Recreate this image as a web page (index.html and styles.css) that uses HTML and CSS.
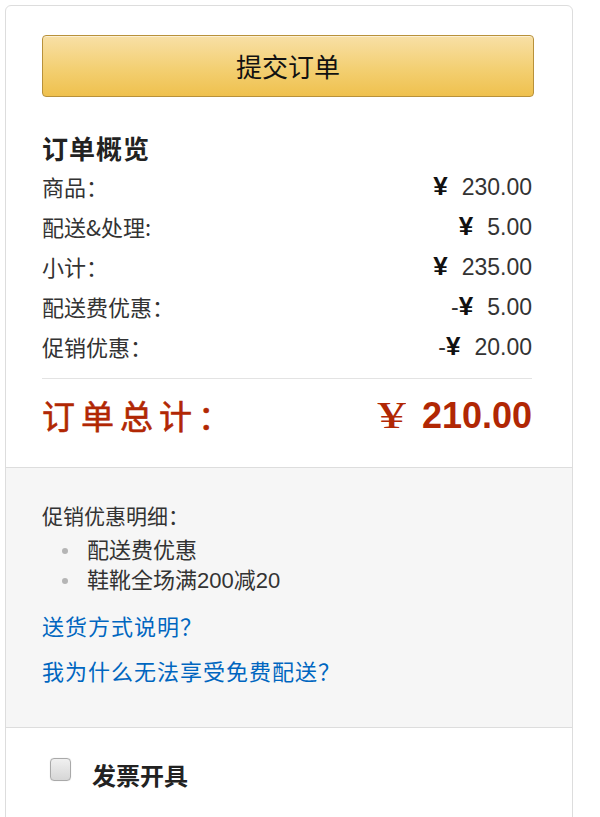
FILE: index.html
```html
<!DOCTYPE html>
<html lang="zh-CN">
<head>
<meta charset="utf-8">
<title>订单概览</title>
<link rel="stylesheet" href="styles.css">
</head>
<body>
<div class="panel">
  <section class="summary">
    <button class="submit-btn" type="button">提交订单</button>
    <h3 class="summary-title">订单概览</h3>
    <div class="rows">
      <div class="row"><span class="label">商品：</span><span class="value"><span class="yen">¥</span>230.00</span></div>
      <div class="row"><span class="label">配送&amp;处理:</span><span class="value"><span class="yen">¥</span>5.00</span></div>
      <div class="row"><span class="label">小计：</span><span class="value"><span class="yen">¥</span>235.00</span></div>
      <div class="row"><span class="label">配送费优惠：</span><span class="value">-<span class="yen">¥</span>5.00</span></div>
      <div class="row"><span class="label">促销优惠：</span><span class="value">-<span class="yen">¥</span>20.00</span></div>
    </div>
    <div class="total">
      <span class="total-label">订单总计：</span>
      <span class="total-value"><span class="total-yen">¥</span>210.00</span>
    </div>
  </section>
  <section class="promo">
    <div class="promo-title">促销优惠明细：</div>
    <ul class="promo-list">
      <li>配送费优惠</li>
      <li>鞋靴全场满200减20</li>
    </ul>
    <a class="help-link" href="#">送货方式说明？</a>
    <a class="help-link second" href="#">我为什么无法享受免费配送？</a>
  </section>
  <section class="invoice">
    <label class="invoice-label"><span class="checkbox"></span><span class="invoice-text">发票开具</span></label>
  </section>
</div>
</body>
</html>
```
FILE: styles.css
```css
html, body {
  margin: 0;
  padding: 0;
  background: #ffffff;
}

body {
  font-family: "Liberation Sans", "Noto Sans CJK SC", sans-serif;
  color: #333333;
  padding: 5px 0 0 5px;
}

.panel {
  box-sizing: border-box;
  width: 568px;
  min-height: 830px;
  border: 1px solid #dddddd;
  border-radius: 6px;
  overflow: hidden;
  background: #ffffff;
}

.summary {
  padding: 29px 40px 22px 36px;
}

.submit-btn {
  display: block;
  box-sizing: border-box;
  width: 492px;
  height: 62px;
  margin: 0;
  padding: 0;
  border: 1px solid #b8913a;
  border-radius: 4px;
  background: linear-gradient(to bottom, #f8e0a6 0%, #f3cf72 55%, #efc14e 100%);
  box-shadow: inset 0 1px 0 rgba(255, 255, 255, 0.5);
  font-family: "Noto Sans CJK SC", sans-serif;
  font-size: 26px;
  line-height: 60px;
  color: #111111;
  cursor: pointer;
}

.summary-title {
  margin: 33px 0 0 0;
  font-family: "Noto Sans CJK SC", sans-serif;
  font-size: 26px;
  font-weight: bold;
  line-height: 36px;
  color: #222222;
  letter-spacing: 1px;
}

.row {
  display: flex;
  justify-content: space-between;
  align-items: center;
  height: 40px;
}

.label {
  font-family: "Noto Sans CJK SC", sans-serif;
  font-size: 22px;
  color: #333333;
}

.value {
  font-family: "Liberation Sans", sans-serif;
  font-size: 23px;
  color: #333333;
}

.yen {
  font-size: 26px;
  font-weight: bold;
  color: #111111;
  margin-right: 14px;
}

.total {
  display: flex;
  justify-content: space-between;
  align-items: center;
  margin-top: 12px;
  border-top: 1px solid #e3e3e3;
  padding-top: 6px;
  height: 60px;
}

.total-label {
  font-family: "Noto Sans CJK SC", sans-serif;
  font-size: 33px;
  letter-spacing: 6px;
  color: #b12704;
  -webkit-text-stroke: 0.6px #b12704;
}

.total-value {
  font-family: "Liberation Sans", sans-serif;
  font-size: 36px;
  font-weight: bold;
  color: #b12704;
}

.total-yen {
  display: inline-block;
  font-family: "Liberation Serif", serif;
  font-size: 38px;
  font-weight: normal;
  transform: scaleX(1.5);
  transform-origin: right center;
  margin-right: 16px;
}

.promo {
  background: #f6f6f6;
  border-top: 1px solid #dddddd;
  padding: 31px 38px 42px 36px;
  display: flex;
  flex-direction: column;
  align-items: flex-start;
}

.promo-title {
  font-family: "Noto Sans CJK SC", sans-serif;
  font-size: 21px;
  line-height: 32px;
  color: #333333;
}

.promo-list {
  list-style: none;
  margin: 5px 0 0 0;
  padding: 0;
}

.promo-list li {
  display: flex;
  align-items: center;
  font-family: "Liberation Sans", "Noto Sans CJK SC", sans-serif;
  font-size: 22px;
  line-height: 30px;
  color: #333333;
}

.promo-list li::before {
  content: "";
  width: 6px;
  height: 6px;
  border-radius: 50%;
  background: #b5b5b5;
  margin: 0 19px 0 20px;
}

.help-link {
  margin-top: 14px;
  font-family: "Noto Sans CJK SC", sans-serif;
  font-size: 22px;
  line-height: 30px;
  letter-spacing: 1px;
  color: #0066c0;
  text-decoration: none;
}

.help-link.second {
  margin-top: 15px;
}

.invoice {
  border-top: 1px solid #dddddd;
  padding: 28px 36px 30px 44px;
  background: #ffffff;
}

.invoice-label {
  display: flex;
  align-items: center;
  height: 36px;
}

.checkbox {
  box-sizing: border-box;
  width: 21px;
  height: 23px;
  border: 1px solid #a9a9a9;
  border-radius: 4px;
  background: linear-gradient(to bottom, #f0f0f0, #d6d6d6);
  box-shadow: 0 0 1px rgba(0, 0, 0, 0.2);
  margin-top: -10px;
}

.invoice-text {
  margin-left: 21px;
  font-family: "Noto Sans CJK SC", sans-serif;
  font-size: 24px;
  font-weight: bold;
  color: #222222;
}
```
